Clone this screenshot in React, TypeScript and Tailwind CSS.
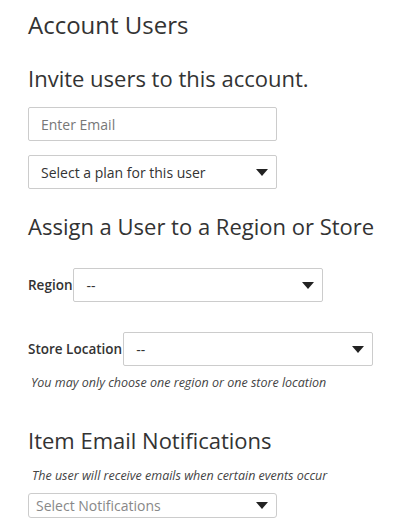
import React from "react";

const Caret = () => (
  <svg width="12" height="7" viewBox="0 0 12 7" className="shrink-0">
    <path d="M0 0 L12 0 L6 7 Z" fill="#222" />
  </svg>
);

const SelectBox = ({
  text,
  className,
  muted = false,
}: {
  text: string;
  className: string;
  muted?: boolean;
}) => (
  <div
    className={`flex items-center justify-between border border-[#cccccc] bg-white ${className}`}
  >
    <span className={muted ? "text-[#888]" : "text-[#333]"}>{text}</span>
    <Caret />
  </div>
);

export default function App() {
  return (
    <div
      className="w-[397px] h-[530px] bg-white pl-[28px] text-[#333]"
      style={{ fontFamily: '"Open Sans", sans-serif' }}
    >
      {/* Account Users */}
      <h1 className="pt-[9px] text-[24px] leading-[32px]">Account Users</h1>

      {/* Invite */}
      <h2 className="mt-[22px] text-[22px] leading-[30px]">
        Invite users to this account.
      </h2>
      <div className="mt-[14px] w-[249px] h-[34px] border border-[#cccccc] rounded-[2px] flex items-center px-[12px] text-[14px] text-[#777]">
        Enter Email
      </div>
      <SelectBox
        text="Select a plan for this user"
        className="mt-[14px] w-[249px] h-[34px] pl-[12px] pr-[8px] text-[14px] rounded-[2px]"
      />

      {/* Assign */}
      <h2 className="mt-[22px] text-[22px] leading-[30px]">
        Assign a User to a Region or Store
      </h2>
      <div className="mt-[27px] flex items-center">
        <span className="text-[13.5px] font-semibold">Region</span>
        <SelectBox
          text="--"
          className="ml-[1px] w-[250px] h-[34px] pl-[12px] pr-[8px] text-[14px] rounded-[2px]"
        />
      </div>
      <div className="mt-[30px] flex items-center">
        <span className="text-[13.5px] font-semibold">Store Location</span>
        <SelectBox
          text="--"
          className="ml-[1px] w-[250px] h-[34px] pl-[12px] pr-[8px] text-[14px] rounded-[2px]"
        />
      </div>
      <p className="mt-[8px] pl-[3px] text-[12.5px] italic text-[#444]">
        You may only choose one region or one store location
      </p>

      {/* Notifications */}
      <h2 className="mt-[32px] text-[22px] leading-[30px]">
        Item Email Notifications
      </h2>
      <p className="mt-[12px] pl-[4px] text-[12.5px] italic text-[#444]">
        The user will receive emails when certain events occur
      </p>
      <SelectBox
        text="Select Notifications"
        muted
        className="mt-[7px] w-[249px] h-[25px] pl-[7px] pr-[8px] text-[14px] rounded-[3px]"
      />
    </div>
  );
}
